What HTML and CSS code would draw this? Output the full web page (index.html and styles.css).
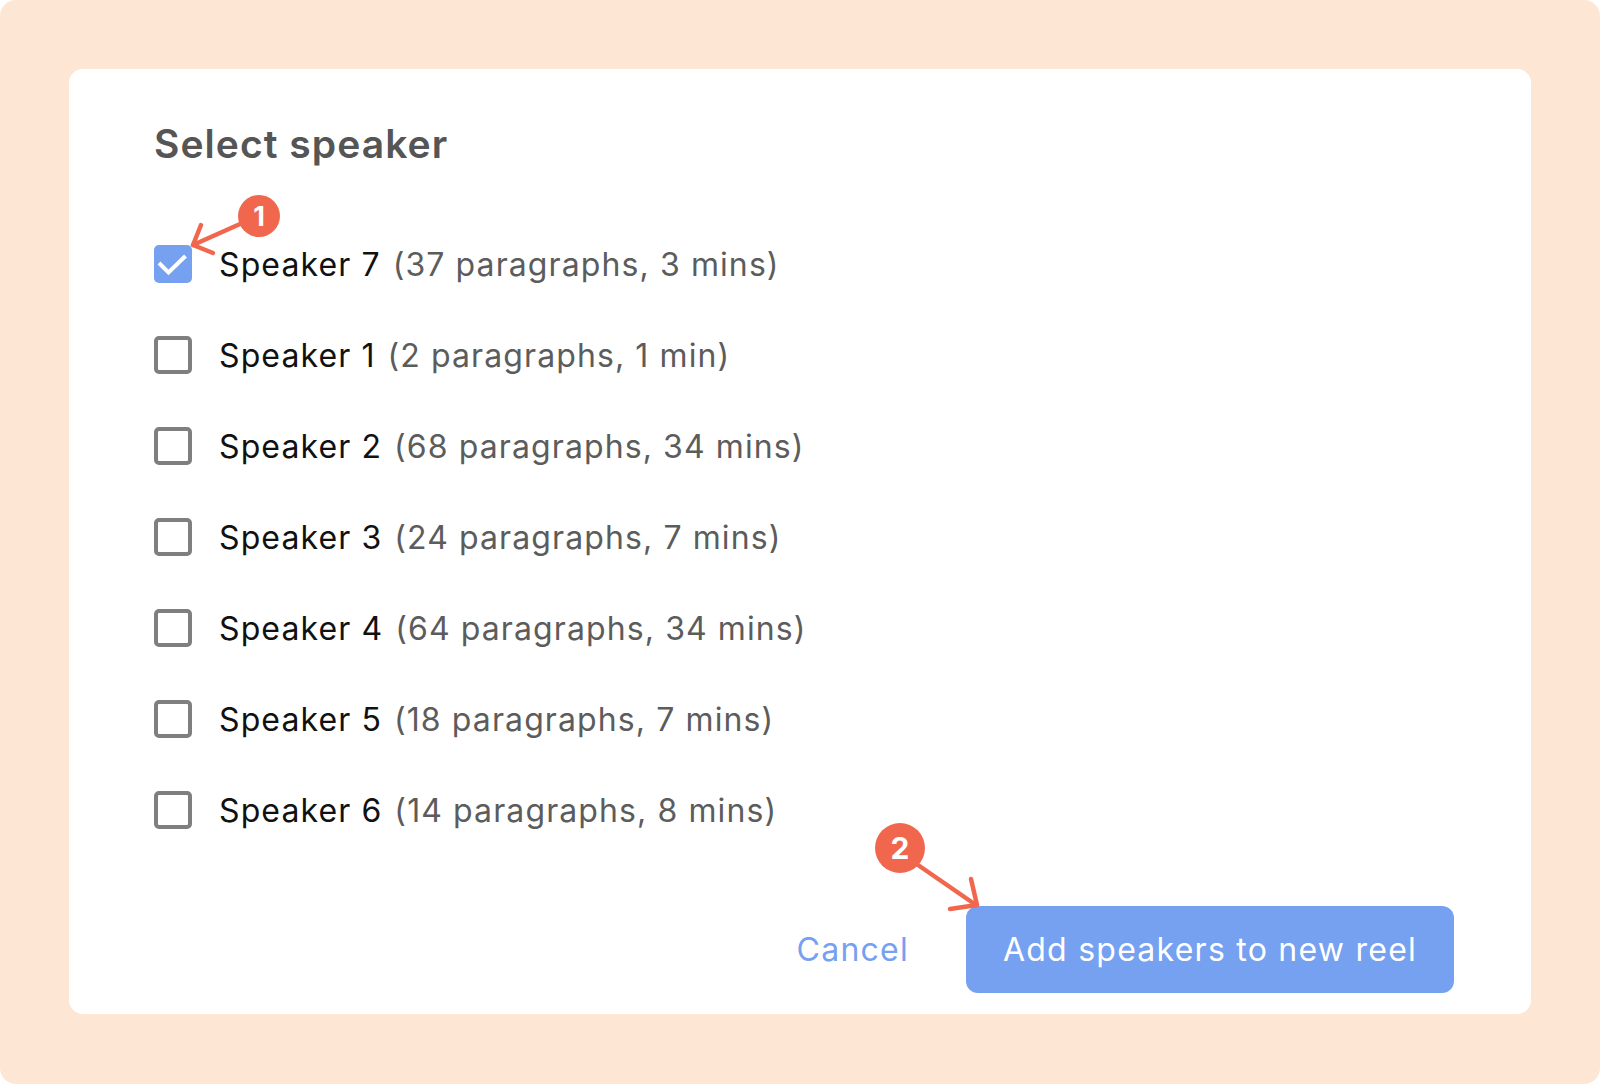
FILE: index.html
```html
<!DOCTYPE html>
<html lang="en">
<head>
  <meta charset="UTF-8">
  <title>Select speaker</title>
  <link rel="stylesheet" href="styles.css">
</head>
<body>
  <div class="frame">
    <div class="dialog">
      <h2>Select speaker</h2>

      <div class="speaker-list">
        <div class="speaker">
          <span class="box checked">
            <svg viewBox="0 0 38 38" width="38" height="38"><path d="M5 18l9.5 9.5L31.5 11" fill="none" stroke="#fff" stroke-width="4"/></svg>
          </span>
          <span class="name">Speaker 7</span>
          <span class="info">(37 paragraphs, 3 mins)</span>
        </div>
        <div class="speaker">
          <span class="box"></span>
          <span class="name">Speaker 1</span>
          <span class="info">(2 paragraphs, 1 min)</span>
        </div>
        <div class="speaker">
          <span class="box"></span>
          <span class="name">Speaker 2</span>
          <span class="info">(68 paragraphs, 34 mins)</span>
        </div>
        <div class="speaker">
          <span class="box"></span>
          <span class="name">Speaker 3</span>
          <span class="info">(24 paragraphs, 7 mins)</span>
        </div>
        <div class="speaker">
          <span class="box"></span>
          <span class="name">Speaker 4</span>
          <span class="info">(64 paragraphs, 34 mins)</span>
        </div>
        <div class="speaker">
          <span class="box"></span>
          <span class="name">Speaker 5</span>
          <span class="info">(18 paragraphs, 7 mins)</span>
        </div>
        <div class="speaker">
          <span class="box"></span>
          <span class="name">Speaker 6</span>
          <span class="info">(14 paragraphs, 8 mins)</span>
        </div>
      </div>

      <div class="actions">
        <a class="cancel" href="#">Cancel</a>
        <button class="add-btn">Add speakers to new reel</button>
      </div>
    </div>

    <!-- Annotation arrows -->
    <svg class="arrows" viewBox="0 0 1600 1084" width="1600" height="1084">
      <g fill="none" stroke="#f0674e" stroke-width="4.5" stroke-linecap="round" stroke-linejoin="round">
        <path d="M240 224L193 245"/>
        <path d="M201 225L193 245L213 253"/>
        <path d="M918 865L976 905"/>
        <path d="M971 879L977 905L950 909"/>
      </g>
    </svg>
    <div class="badge badge-one">1</div>
    <div class="badge badge-two">2</div>
  </div>
</body>
</html>
```

FILE: styles.css
```css
body {
  margin: 0;
  background-color: #fff;
  font-family: Inter, "Liberation Sans", sans-serif;
}

.frame {
  position: relative;
  box-sizing: border-box;
  height: 1084px;
  padding: 69px;
  background-color: #fde6d3;
  border-radius: 16px;
}

/* Dialog card */
.dialog {
  box-sizing: border-box;
  height: 945px;
  padding: 50px 77px 21px 85px;
  background-color: #fff;
  border-radius: 14px;
  display: flex;
  flex-direction: column;
}

.dialog h2 {
  margin: 0;
  font-size: 39px;
  line-height: 50px;
  font-weight: 600;
  letter-spacing: 1.05px;
  color: #555;
}

/* Speaker rows */
.speaker-list {
  margin-top: 76px;
  display: flex;
  flex-direction: column;
  gap: 53px;
}

.speaker {
  display: flex;
  align-items: center;
  height: 38px;
  font-size: 32px;
  letter-spacing: 1.1px;
}

.box {
  box-sizing: border-box;
  width: 38px;
  height: 38px;
  margin-right: 27px;
  border: 4px solid #7f7f7f;
  border-radius: 5px;
}

.box.checked {
  border: none;
  background-color: #76a0f0;
}

.box svg {
  display: block;
}

.name {
  color: #111;
  margin-right: 12px;
}

.info {
  color: #5c5c5c;
}

/* Footer buttons */
.actions {
  margin-top: auto;
  display: flex;
  justify-content: flex-end;
  align-items: center;
  gap: 57px;
}

.cancel {
  font-size: 32px;
  letter-spacing: 1.25px;
  color: #76a0f0;
  text-decoration: none;
}

.add-btn {
  width: 488px;
  height: 87px;
  border: none;
  border-radius: 12px;
  background-color: #76a0f0;
  color: #fff;
  font-family: inherit;
  font-size: 32px;
  letter-spacing: 1.25px;
}

/* Annotations */
.arrows {
  position: absolute;
  top: 0;
  left: 0;
}

.badge {
  position: absolute;
  border-radius: 50%;
  background-color: #f0674e;
  color: #fff;
  font-weight: 700;
  display: flex;
  align-items: center;
  justify-content: center;
}

.badge-one {
  left: 238px;
  top: 195px;
  width: 42px;
  height: 42px;
  font-size: 27px;
}

.badge-two {
  left: 875px;
  top: 823px;
  width: 50px;
  height: 50px;
  font-size: 30px;
}
```
